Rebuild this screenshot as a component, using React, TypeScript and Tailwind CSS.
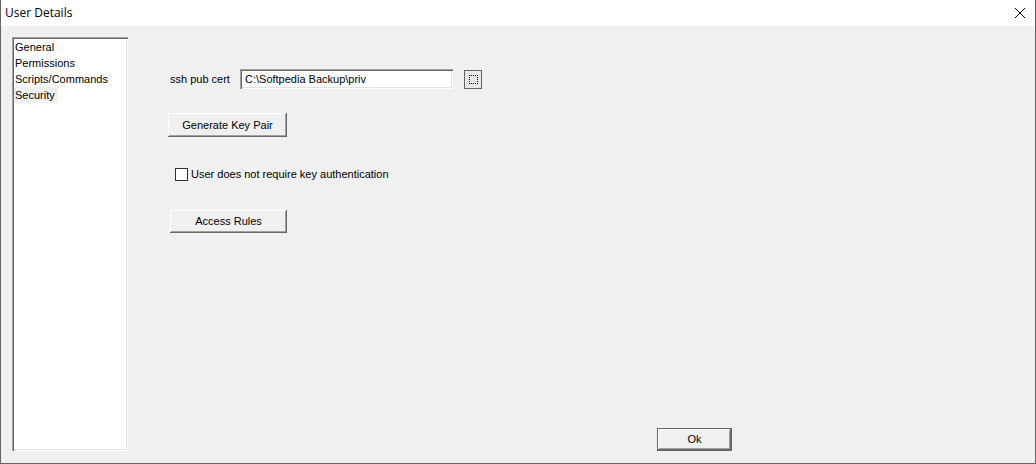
import React from "react";

const raised =
  "bg-[#f0f0f0] shadow-[inset_-1px_-1px_0_#696969,inset_1px_1px_0_#ffffff,inset_-2px_-2px_0_#a0a0a0]";
const sunken =
  "bg-white shadow-[inset_1px_1px_0_#a0a0a0,inset_2px_2px_0_#696969,inset_-1px_-1px_0_#ffffff,inset_-2px_-2px_0_#e3e3e3]";

function Button({ className, children }: { className: string; children: React.ReactNode }) {
  return (
    <button className={"flex items-center justify-center text-[11px] text-black " + raised + " " + className}>
      {children}
    </button>
  );
}

export default function App() {
  const items = ["General", "Permissions", "Scripts/Commands", "Security"];
  return (
    <div
      className="flex h-[464px] w-[1036px] flex-col border-x border-b border-[#646464] bg-white"
      style={{ fontFamily: '"Liberation Sans", Arial, sans-serif' }}
    >
      <div className="flex h-[26px] shrink-0 items-center justify-between bg-white pl-[4px] pr-[8px]">
        <span className="text-[12px] text-black" style={{ fontFamily: '"Open Sans", "Noto Sans", sans-serif' }}>
          User Details
        </span>
        <svg width="12" height="12" viewBox="0 0 12 12" className="mr-[1px]">
          <path d="M1 1 L11 11 M11 1 L1 11" stroke="#000" strokeWidth="1" />
        </svg>
      </div>

      <div className="flex flex-1 items-start bg-[#f0f0f0] text-[11px] text-black">
        <div className={"ml-[11px] mt-[11px] h-[414px] w-[116px] shrink-0 p-[2px] " + sunken}>
          {items.map((it) => (
            <div key={it} className="flex h-[16px] items-center">
              <span className={"pl-[1px] pr-[3px] leading-[16px] " + (it === "Security" ? "bg-[#f0f0f0]" : "")}>
                {it}
              </span>
            </div>
          ))}
        </div>

        <div className="ml-[40px] flex h-full flex-1 flex-col pb-[12px] pt-[43px]">
          <div className="flex items-center pl-[2px]">
            <span className="w-[70px]">ssh pub cert</span>
            <div className={"flex h-[20px] w-[213px] items-center pl-[5px] " + sunken}>
              C:\Softpedia Backup\priv
            </div>
            <div className="ml-[11px] mt-[1px] flex h-[19px] w-[18px] items-center justify-center border border-[#646464] bg-[#e8e8e8]">
              <div className="h-[9px] w-[9px] border border-dotted border-black" />
            </div>
          </div>

          <Button className="mt-[24px] h-[24px] w-[119px]">Generate Key Pair</Button>

          <div className="mt-[29px] flex items-center pl-[7px]">
            <div className="h-[13px] w-[13px] border border-[#333333] bg-white" />
            <span className="ml-[3px]">User does not require key authentication</span>
          </div>

          <Button className="ml-[2px] mt-[27px] h-[23px] w-[117px]">Access Rules</Button>

          <div className="flex-1" />

          <div className="ml-[489px] h-[23px] w-[75px] border border-[#646464]">
            <Button className="h-full w-full">Ok</Button>
          </div>
        </div>
      </div>
    </div>
  );
}
